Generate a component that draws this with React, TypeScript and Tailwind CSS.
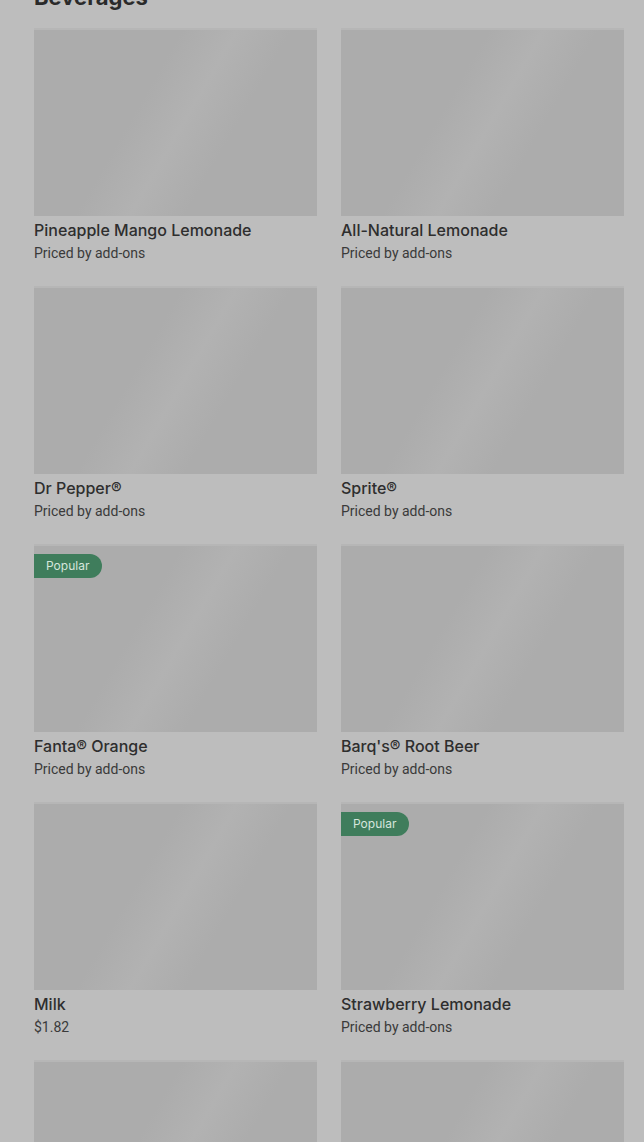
const items = [
	{ name: "Pineapple Mango Lemonade", sub: "Priced by add-ons" },
	{ name: "All-Natural Lemonade", sub: "Priced by add-ons" },
	{ name: "Dr Pepper®", sub: "Priced by add-ons" },
	{ name: "Sprite®", sub: "Priced by add-ons" },
	{ name: "Fanta® Orange", sub: "Priced by add-ons", popular: true },
	{ name: "Barq's® Root Beer", sub: "Priced by add-ons" },
	{ name: "Milk", sub: "$1.82" },
	{ name: "Strawberry Lemonade", sub: "Priced by add-ons", popular: true },
	{ name: "", sub: "" },
	{ name: "", sub: "" },
];

const Card = ({ name, sub, popular }: { name: string; sub: string; popular?: boolean }) => (
	<div className="flex flex-col">
		<div className="relative h-[188px] border-t-2 border-[#b6b6b6] bg-[linear-gradient(120deg,#acacac_38%,#b2b2b2_52%,#acacac_66%)]">
			{popular && (
				<span className="absolute left-0 top-2 flex h-6 items-center rounded-r-full bg-[#3f7d5c] pl-3 pr-[13px] text-xs text-[#d6e6dc]">
					Popular
				</span>
			)}
		</div>
		<div className="mt-1 text-base font-medium leading-5 text-[#2e2e2e]">{name}</div>
		<div className="mt-[3px] font-['Roboto',sans-serif] text-sm leading-5 text-[#3a3a3a]">{sub}</div>
	</div>
);

export default function App() {
	return (
		<div className="h-[1142px] overflow-hidden bg-[#bdbdbd] font-['Inter',sans-serif]">
			<div className="-mt-[19px] pl-[34px] pr-[20px]">
				<h2 className="text-[22px] font-bold leading-8 text-[#2a2a2a]">Beverages</h2>
				<div className="mt-[15px] grid grid-cols-2 gap-x-6 gap-y-[23px]">
					{items.map((it, i) => (
						<Card key={i} {...it} />
					))}
				</div>
			</div>
		</div>
	);
}
